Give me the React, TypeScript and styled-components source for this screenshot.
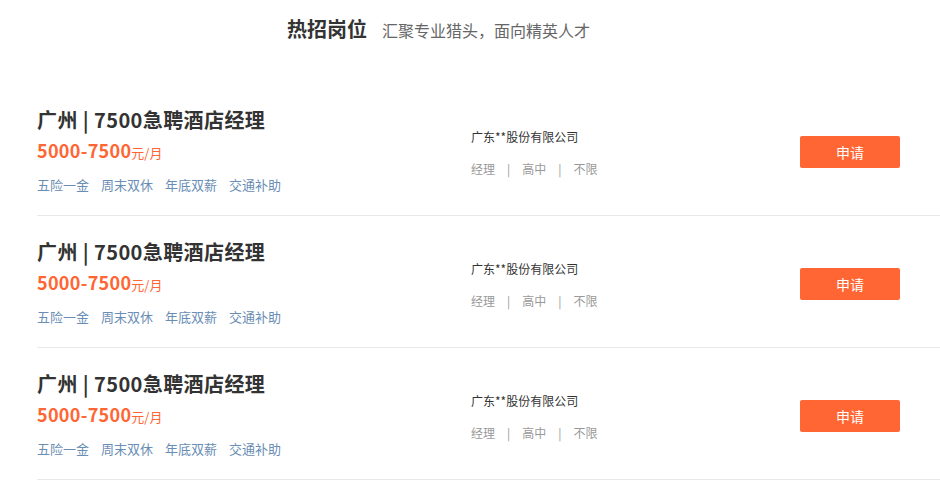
import React from 'react'
import styled, { createGlobalStyle } from 'styled-components'

const GlobalStyle = createGlobalStyle`
  html, body {
    margin: 0;
    padding: 0;
    background: #fff;
    overflow: hidden;
  }
  body {
    font-family: "Noto Sans CJK SC", "Noto Sans", "Liberation Sans", sans-serif;
    color: #333;
  }
`

type Job = {
  title: string
  salary: string
  tags: string[]
  company: string
  details: string[]
}

const jobs: Job[] = [1, 2, 3].map(() => ({
  title: '广州 | 7500急聘酒店经理',
  salary: '5000-7500',
  tags: ['五险一金', '周末双休', '年底双薪', '交通补助'],
  company: '广东**股份有限公司',
  details: ['经理', '高中', '不限'],
}))

const Page = styled.div`
  width: 940px;
  height: 500px;
  overflow: hidden;
`

const Header = styled.div`
  display: flex;
  align-items: baseline;
  gap: 15px;
  padding: 14px 0 0 287px;
  height: 84px;
  box-sizing: border-box;
`

const HeaderTitle = styled.h2`
  margin: 0;
  font-size: 20px;
  line-height: 30px;
  font-weight: 700;
  color: #333;
`

const HeaderSub = styled.span`
  font-size: 16px;
  line-height: 30px;
  color: #666;
`

const List = styled.ul`
  list-style: none;
  margin: 0;
  padding: 0 0 0 37px;
`

const Row = styled.li`
  display: flex;
  align-items: flex-start;
  height: 132px;
  box-sizing: border-box;
  padding-top: 23px;
  border-bottom: 1px solid #e8e8e8;
  width: 920px;
`

const Main = styled.div`
  width: 434px;
  display: flex;
  flex-direction: column;
`

const Title = styled.div`
  font-size: 20px;
  line-height: 26px;
  font-weight: 700;
  letter-spacing: 0.4px;
  color: #333;
`

const Salary = styled.div`
  margin-top: 5px;
  font-size: 18px;
  line-height: 24px;
  font-weight: 700;
  letter-spacing: 0.3px;
  color: #ff6633;
`

const Unit = styled.span`
  font-size: 13px;
  font-weight: 400;
  letter-spacing: 0;
`

const Tags = styled.div`
  display: flex;
  gap: 12px;
  margin-top: 10px;
`

const Tag = styled.span`
  font-size: 13px;
  line-height: 20px;
  color: #6a8db4;
`

const Company = styled.div`
  width: 329px;
  padding-top: 21px;
  display: flex;
  flex-direction: column;
`

const CompanyName = styled.div`
  font-size: 12px;
  line-height: 18px;
  color: #333;
`

const Details = styled.div`
  display: flex;
  gap: 12px;
  margin-top: 14px;
  font-size: 12px;
  line-height: 18px;
  color: #999;
`

const Pipe = styled.span`
  color: #999;
`

const Apply = styled.button`
  margin-top: 29px;
  width: 100px;
  height: 32px;
  border: none;
  border-radius: 2px;
  background: #ff6633;
  color: #fff;
  font-family: inherit;
  font-size: 14px;
  cursor: pointer;
`

export default function App() {
  return (
    <Page>
      <GlobalStyle />
      <Header>
        <HeaderTitle>热招岗位</HeaderTitle>
        <HeaderSub>汇聚专业猎头，面向精英人才</HeaderSub>
      </Header>
      <List>
        {jobs.map((job, i) => (
          <Row key={i}>
            <Main>
              <Title>{job.title}</Title>
              <Salary>
                {job.salary}
                <Unit>元/月</Unit>
              </Salary>
              <Tags>
                {job.tags.map(t => (
                  <Tag key={t}>{t}</Tag>
                ))}
              </Tags>
            </Main>
            <Company>
              <CompanyName>{job.company}</CompanyName>
              <Details>
                {job.details.map((d, j) => (
                  <React.Fragment key={d}>
                    {j > 0 && <Pipe>|</Pipe>}
                    <span>{d}</span>
                  </React.Fragment>
                ))}
              </Details>
            </Company>
            <Apply>申请</Apply>
          </Row>
        ))}
      </List>
    </Page>
  )
}
